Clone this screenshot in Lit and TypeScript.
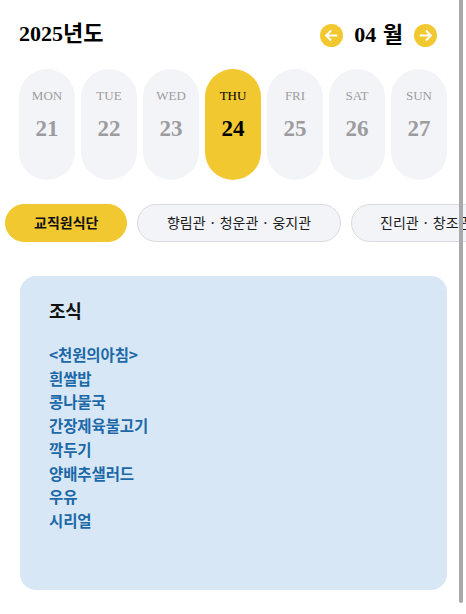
import { LitElement, html, css, svg } from "lit";
import { customElement } from "lit/decorators.js";

const days = [
  ["MON", "21"], ["TUE", "22"], ["WED", "23"], ["THU", "24"],
  ["FRI", "25"], ["SAT", "26"], ["SUN", "27"],
];
const menu = ["<천원의아침>", "흰쌀밥", "콩나물국", "간장제육불고기", "깍두기", "양배추샐러드", "우유", "시리얼"];

const arrow = (left: boolean) => svg`<svg class="ic" viewBox="0 0 24 24" width="23" height="23">
  <circle cx="12" cy="12" r="12" fill="#f2c831"/>
  <path d="${left ? "M18 12H6.5M11.5 6.8L6.3 12l5.2 5.2" : "M6 12h11.5M12.5 6.8l5.2 5.2-5.2 5.2"}" fill="none" stroke="#fff" stroke-width="1.9"/>
</svg>`;

@customElement("app-root")
export class AppRoot extends LitElement {
  static styles = css`
    :host {
      display: block;
      position: relative;
      width: 466px;
      height: 614px;
      overflow: hidden;
      background: #fff;
      font-family: "Liberation Serif", "Noto Sans CJK KR", serif;
      color: #000;
    }
    .top { padding: 21px 19px 0; }
    .head {
      display: flex;
      align-items: center;
      justify-content: space-between;
      height: 28px;
    }
    .title { font-size: 22px; line-height: 26px; font-weight: 700; margin-top: -2px; }
    .month { display: flex; align-items: center; gap: 11px; padding-right: 10px; }
    .month b { font-size: 22px; line-height: 26px; font-weight: 700; word-spacing: 1px; }
    .ic { display: block; }
    .days { display: flex; gap: 6px; margin-top: 20px; }
    .day {
      width: 56px;
      height: 111px;
      box-sizing: border-box;
      padding-top: 19px;
      border-radius: 28px;
      background: #f3f4f8;
      color: #9c9c9f;
      text-align: center;
    }
    .day.on { background: #f2c831; color: #000; }
    .dn { font-size: 13px; line-height: 16px; }
    .dd { font-size: 23px; font-weight: 700; line-height: 28px; margin-top: 11px; }
    .chips {
      display: flex;
      gap: 10px;
      margin-top: 24px;
      padding-left: 5px;
      font-family: "Noto Sans CJK KR", sans-serif;
    }
    .chip {
      flex: none;
      box-sizing: border-box;
      height: 38px;
      padding: 0 28.5px;
      border-radius: 19px;
      border: 1px solid #d9dbe0;
      background: #f3f4f8;
      font-size: 14px;
      line-height: 35px;
      color: #1c1c1c;
      white-space: nowrap;
    }
    .chip.on { padding: 0 28px; background: #f2c831; border-color: #f2c831; font-weight: 700; color: #111; }
    .card {
      box-sizing: border-box;
      margin: 34px 0 0 20px;
      width: 427px;
      height: 314px;
      border-radius: 16px;
      background: #d8e7f5;
      padding: 21px 29px;
      font-family: "Noto Sans CJK KR", sans-serif;
    }
    .card h2 { margin: 0; font-size: 18px; line-height: 26px; font-weight: 700; color: #111; letter-spacing: -0.2px; }
    .list { margin-top: 20px; }
    .list div { font-size: 15.5px; line-height: 23.7px; font-weight: 700; color: #1d69a8; letter-spacing: -0.1px; }
    .sb {
      position: absolute;
      left: 459px;
      top: 0;
      width: 4px;
      height: 603px;
      background: #a9a9a9;
      border-radius: 0 0 2px 2px;
    }
  `;

  render() {
    return html`
      <div class="top">
        <div class="head">
          <div class="title">2025년도</div>
          <div class="month">${arrow(true)}<b>04 월</b>${arrow(false)}</div>
        </div>
        <div class="days">
          ${days.map(([n, d]) => html`<div class="day ${n === "THU" ? "on" : ""}">
            <div class="dn">${n}</div><div class="dd">${d}</div>
          </div>`)}
        </div>
      </div>
      <div class="chips">
        <div class="chip on">교직원식단</div>
        <div class="chip">향림관 · 청운관 · 웅지관</div>
        <div class="chip">진리관 · 창조관</div>
      </div>
      <div class="card">
        <h2>조식</h2>
        <div class="list">${menu.map((m) => html`<div>${m}</div>`)}</div>
      </div>
      <div class="sb"></div>
    `;
  }
}
